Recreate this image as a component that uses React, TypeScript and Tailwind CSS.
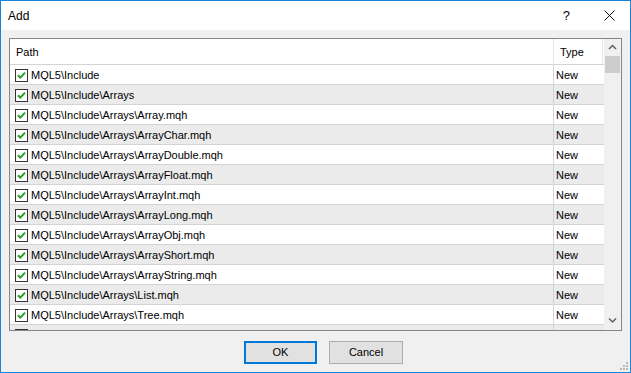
import type { ReactElement } from "react";

const PATHS = [
  "MQL5\\Include",
  "MQL5\\Include\\Arrays",
  "MQL5\\Include\\Arrays\\Array.mqh",
  "MQL5\\Include\\Arrays\\ArrayChar.mqh",
  "MQL5\\Include\\Arrays\\ArrayDouble.mqh",
  "MQL5\\Include\\Arrays\\ArrayFloat.mqh",
  "MQL5\\Include\\Arrays\\ArrayInt.mqh",
  "MQL5\\Include\\Arrays\\ArrayLong.mqh",
  "MQL5\\Include\\Arrays\\ArrayObj.mqh",
  "MQL5\\Include\\Arrays\\ArrayShort.mqh",
  "MQL5\\Include\\Arrays\\ArrayString.mqh",
  "MQL5\\Include\\Arrays\\List.mqh",
  "MQL5\\Include\\Arrays\\Tree.mqh",
  "MQL5\\Include\\Arrays\\TreeNode.mqh",
];

function CheckBox(): ReactElement {
  return (
    <svg width="13" height="13" viewBox="0 0 13 13" className="shrink-0">
      <rect x="0.5" y="0.5" width="12" height="12" fill="#fff" stroke="#333" />
      <path d="M3 6.2 L5.3 8.6 L10 3.6" fill="none" stroke="#21a121" strokeWidth="2" />
    </svg>
  );
}

function Row({ path, index }: { path: string; index: number }): ReactElement {
  const shade = index % 2 === 1 ? "bg-[#ebebeb]" : "bg-white";
  return (
    <div className={`flex h-[20px] shrink-0 border-t border-[#d4d4d4] first:border-t-0 ${shade}`}>
      <div className="flex w-[544px] items-center gap-[3px] border-r border-[#d4d4d4] pl-[5px] pt-[1px]">
        <CheckBox />
        <span className="whitespace-nowrap">{path}</span>
      </div>
      <div className="flex flex-1 items-center pl-[2px] pt-[1px]">New</div>
    </div>
  );
}

export default function App(): ReactElement {
  return (
    <div
      className="relative flex h-[373px] w-[631px] flex-col border border-[#1883d7] bg-[#f0f0f0] text-[11px] text-black"
      style={{ fontFamily: '"Liberation Sans", Arial, sans-serif' }}
    >
      <div className="flex h-[29px] shrink-0 items-center bg-white pl-[7px]">
        <span className="text-[12px]">Add</span>
        <span className="ml-auto mr-[34px] text-[13px]">?</span>
        <svg width="11" height="11" viewBox="0 0 11 11" className="mr-[15px]">
          <path d="M0.5 0.5 L10.5 10.5 M10.5 0.5 L0.5 10.5" stroke="#111" strokeWidth="1" />
        </svg>
      </div>

      <div className="ml-[8px] mt-[8px] flex h-[293px] w-[613px] border border-[#828790] bg-white">
        <div className="flex w-[594px] flex-col overflow-hidden">
          <div className="flex h-[25px] shrink-0 bg-white">
            <div className="flex w-[544px] items-center border-r border-[#e5e5e5] pl-[6px] pt-[2px]">Path</div>
            <div className="flex w-[49px] items-center border-r border-[#e5e5e5] pl-[6px] pt-[2px]">Type</div>
          </div>
          {PATHS.map((p, i) => (
            <Row key={p} path={p} index={i} />
          ))}
        </div>
        <div className="flex w-[17px] flex-col items-center bg-[#f0f0f0]">
          <svg width="9" height="17" viewBox="0 0 9 17" className="shrink-0">
            <path d="M1 10 L4.5 6.5 L8 10" fill="none" stroke="#606060" strokeWidth="1.5" />
          </svg>
          <div className="h-[17px] w-[15px] bg-[#cdcdcd]" />
          <div className="flex-1" />
          <svg width="9" height="17" viewBox="0 0 9 17" className="mb-[1px] shrink-0">
            <path d="M1 6.5 L4.5 10 L8 6.5" fill="none" stroke="#606060" strokeWidth="1.5" />
          </svg>
        </div>
      </div>

      <div className="ml-[243px] mt-[10px] flex gap-[12px]">
        <button
          type="button"
          className="h-[23px] w-[73px] border-2 border-[#0078d7] bg-[#e1e1e1] text-[11px]"
        >
          OK
        </button>
        <button
          type="button"
          className="h-[23px] w-[74px] border border-[#adadad] bg-[#e1e1e1] text-[11px]"
        >
          Cancel
        </button>
      </div>

      <svg width="10" height="10" viewBox="0 0 10 10" className="absolute bottom-[1px] right-[1px]">
        <rect x="7" y="1" width="2" height="2" fill="#b8b8b8" />
        <rect x="4" y="4" width="2" height="2" fill="#b8b8b8" />
        <rect x="7" y="4" width="2" height="2" fill="#b8b8b8" />
        <rect x="1" y="7" width="2" height="2" fill="#b8b8b8" />
        <rect x="4" y="7" width="2" height="2" fill="#b8b8b8" />
        <rect x="7" y="7" width="2" height="2" fill="#b8b8b8" />
      </svg>
    </div>
  );
}
